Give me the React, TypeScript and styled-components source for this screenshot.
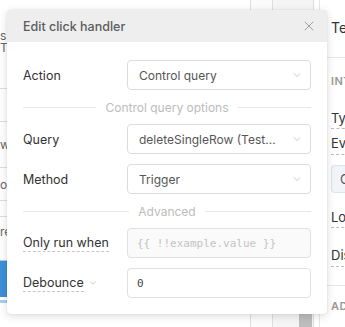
import styled, { createGlobalStyle } from 'styled-components'
import { X, ChevronDown } from 'lucide-react'

const GlobalStyle = createGlobalStyle`
  html, body {
    margin: 0;
    padding: 0;
    background: #ffffff;
    font-family: Inter, 'Noto Sans', sans-serif;
  }
`

export default function App() {
  return (
    <>
      <GlobalStyle />
      <Page>
        <LeftPane>
          <Para>
            <span>s</span>
            <span>Th</span>
          </Para>
          <TableRow h={32} />
          <TableRow h={45}>w</TableRow>
          <TableRow h={32}>ol</TableRow>
          <TableRow h={15} />
          <TableRow h={28}>re</TableRow>
          <BlueBlock />
        </LeftPane>

        <Canvas>
          <Strip />
          <Strip wide>
            <Thumb />
          </Strip>
        </Canvas>

        <Inspector>
          <InspectorHead>Text</InspectorHead>
          <SectionTitle>INTERACTION</SectionTitle>
          <PropLabel>Type</PropLabel>
          <PropLabel>Event</PropLabel>
          <HandlerBox>Click</HandlerBox>
          <PropLabel>Loading</PropLabel>
          <PropLabel gap={17}>Disabled</PropLabel>
          <SectionTitle divided>ADVANCED</SectionTitle>
        </Inspector>

        <Popover>
          <PopHeader>
            <PopTitle>Edit click handler</PopTitle>
            <CloseButton>
              <X size={16} strokeWidth={1.5} />
            </CloseButton>
          </PopHeader>
          <PopBody>
            <Row>
              <Label>Action</Label>
              <Select>
                <SelectValue>Control query</SelectValue>
                <ChevronDown size={12} strokeWidth={1.5} />
              </Select>
            </Row>
            <Divider>Control query options</Divider>
            <Row>
              <Label>Query</Label>
              <Select>
                <SelectValue>deleteSingleRow (TestDatabase)</SelectValue>
                <ChevronDown size={12} strokeWidth={1.5} />
              </Select>
            </Row>
            <Row>
              <Label>Method</Label>
              <Select>
                <SelectValue>Trigger</SelectValue>
                <ChevronDown size={12} strokeWidth={1.5} />
              </Select>
            </Row>
            <Divider>Advanced</Divider>
            <Row>
              <Label>
                <Dotted>Only run when</Dotted>
              </Label>
              <CodeInput muted>{'{{ !!example.value }}'}</CodeInput>
            </Row>
            <Row>
              <Label>
                <Dotted>Debounce</Dotted>
                <SmallChevron>
                  <ChevronDown size={10} strokeWidth={1.5} />
                </SmallChevron>
              </Label>
              <CodeInput>0</CodeInput>
            </Row>
          </PopBody>
        </Popover>
      </Page>
    </>
  )
}

const Page = styled.div`
  position: relative;
  display: flex;
  width: 345px;
  height: 327px;
  overflow: hidden;
  background: #ffffff;
`

const LeftPane = styled.div`
  width: 20px;
  flex-shrink: 0;
  display: flex;
  flex-direction: column;
  overflow: hidden;
  font-size: 12px;
  color: #555;
`

const Para = styled.div`
  height: 88px;
  padding-top: 30px;
  box-sizing: border-box;
  display: flex;
  flex-direction: column;
  line-height: 12px;
  color: #666;
`

const TableRow = styled.div<{ h: number }>`
  height: ${(p) => p.h}px;
  border-top: 1px solid #dddddd;
  display: flex;
  align-items: center;
  color: #666;
`

const BlueBlock = styled.div`
  margin-top: 16px;
  height: 36px;
  background: #3d8fd9;
  border-bottom: 3px solid #ffffff;
  box-shadow: 0 3px 0 #a9cdef, 0 -1px 0 #a9cdef;
`

const Canvas = styled.div`
  flex: 1;
  display: flex;
  justify-content: flex-end;
  padding-right: 5px;
`

const Strip = styled.div<{ wide?: boolean }>`
  width: ${(p) => (p.wide ? 40 : 21)}px;
  height: 100%;
  border-left: 1px solid #dedede;
  border-right: ${(p) => (p.wide ? '1px solid #dedede' : 'none')};
  background: ${(p) => (p.wide ? '#f5f5f5' : '#fbfbfb')};
  display: flex;
  flex-direction: column;
  justify-content: flex-end;
  align-items: flex-end;
`

const Thumb = styled.div`
  width: 13px;
  height: 14px;
  margin-right: 1px;
  background: #bdbdbd;
`

const Inspector = styled.div`
  width: 26px;
  flex-shrink: 0;
  box-sizing: border-box;
  border-left: 1px solid #e6e6e6;
  display: flex;
  flex-direction: column;
  overflow: hidden;
  white-space: nowrap;
  font-size: 13px;
  color: #333;
`

const InspectorHead = styled.div`
  height: 60px;
  padding: 19px 0 0 11px;
  box-sizing: border-box;
  border-bottom: 1px solid #e6e6e6;
  font-size: 14px;
  line-height: 18px;
`

const SectionTitle = styled.div<{ divided?: boolean }>`
  padding-left: 11px;
  height: ${(p) => (p.divided ? 41 : 46)}px;
  line-height: ${(p) => (p.divided ? 41 : 46)}px;
  border-top: ${(p) => (p.divided ? '1px solid #e6e6e6' : 'none')};
  font-size: 11px;
  font-weight: 600;
  letter-spacing: 0.4px;
  color: #999;
`

const PropLabel = styled.div<{ gap?: number }>`
  margin: ${(p) => p.gap ?? 4}px 0 0 11px;
  height: 22px;
  line-height: 20px;
  width: max-content;
  border-bottom: 1px dashed #bbbbbb;
  margin-bottom: ${(p) => (p.gap ? 18 : 0)}px;
`

const HandlerBox = styled.div`
  margin: 10px 0 10px 11px;
  height: 26px;
  line-height: 26px;
  padding-left: 8px;
  border: 1px solid #dbe4ee;
  border-right: none;
  border-radius: 4px 0 0 4px;
  background: #f1f5f9;
  color: #555;
`

const Popover = styled.div`
  position: absolute;
  left: 7px;
  top: 10px;
  width: 320px;
  background: #ffffff;
  border-radius: 4px;
  box-shadow: 0 2px 8px rgba(0, 0, 0, 0.14), 0 0 1px rgba(0, 0, 0, 0.2);
  overflow: hidden;
`

const PopHeader = styled.div`
  height: 32px;
  padding: 0 10px 0 16px;
  display: flex;
  align-items: center;
  justify-content: space-between;
  background: #eeeeee;
`

const PopTitle = styled.div`
  font-size: 12.5px;
  font-weight: 500;
  color: #5c5c5c;
`

const CloseButton = styled.div`
  display: flex;
  color: #a0a0a0;
`

const PopBody = styled.div`
  padding: 18px 16px 16px;
  display: flex;
  flex-direction: column;
  gap: 10px;
`

const Row = styled.div`
  display: flex;
  align-items: center;
  height: 30px;
`

const Label = styled.div`
  width: 104px;
  flex-shrink: 0;
  display: flex;
  align-items: center;
  font-size: 12.5px;
  color: #333;
`

const Dotted = styled.span`
  border-bottom: 1px dashed #c8c8c8;
  line-height: 16px;
`

const SmallChevron = styled.span`
  display: flex;
  margin-left: 4px;
  color: #aaa;
`

const Select = styled.div`
  flex: 1;
  min-width: 0;
  height: 30px;
  box-sizing: border-box;
  border: 1px solid #dcdcdc;
  border-radius: 4px;
  padding: 0 7px 0 11px;
  display: flex;
  align-items: center;
  gap: 14px;
  color: #b5b5b5;
`

const SelectValue = styled.span`
  flex: 1;
  min-width: 0;
  overflow: hidden;
  white-space: nowrap;
  text-overflow: ellipsis;
  font-size: 12px;
  color: #555;
`

const Divider = styled.div`
  height: 14px;
  display: flex;
  align-items: center;
  gap: 9px;
  font-size: 12px;
  color: #bcbcbc;
  &::before,
  &::after {
    content: '';
    flex: 1;
    height: 1px;
    background: #e6e6e6;
  }
`

const CodeInput = styled.div<{ muted?: boolean }>`
  flex: 1;
  height: 30px;
  box-sizing: border-box;
  border: 1px solid #e0e0e0;
  border-radius: 4px;
  padding-left: 9px;
  display: flex;
  align-items: center;
  background: ${(p) => (p.muted ? '#fafafa' : '#ffffff')};
  font-family: 'DejaVu Sans Mono', 'Liberation Mono', monospace;
  font-size: 11px;
  color: ${(p) => (p.muted ? '#c4c4c4' : '#444')};
`
